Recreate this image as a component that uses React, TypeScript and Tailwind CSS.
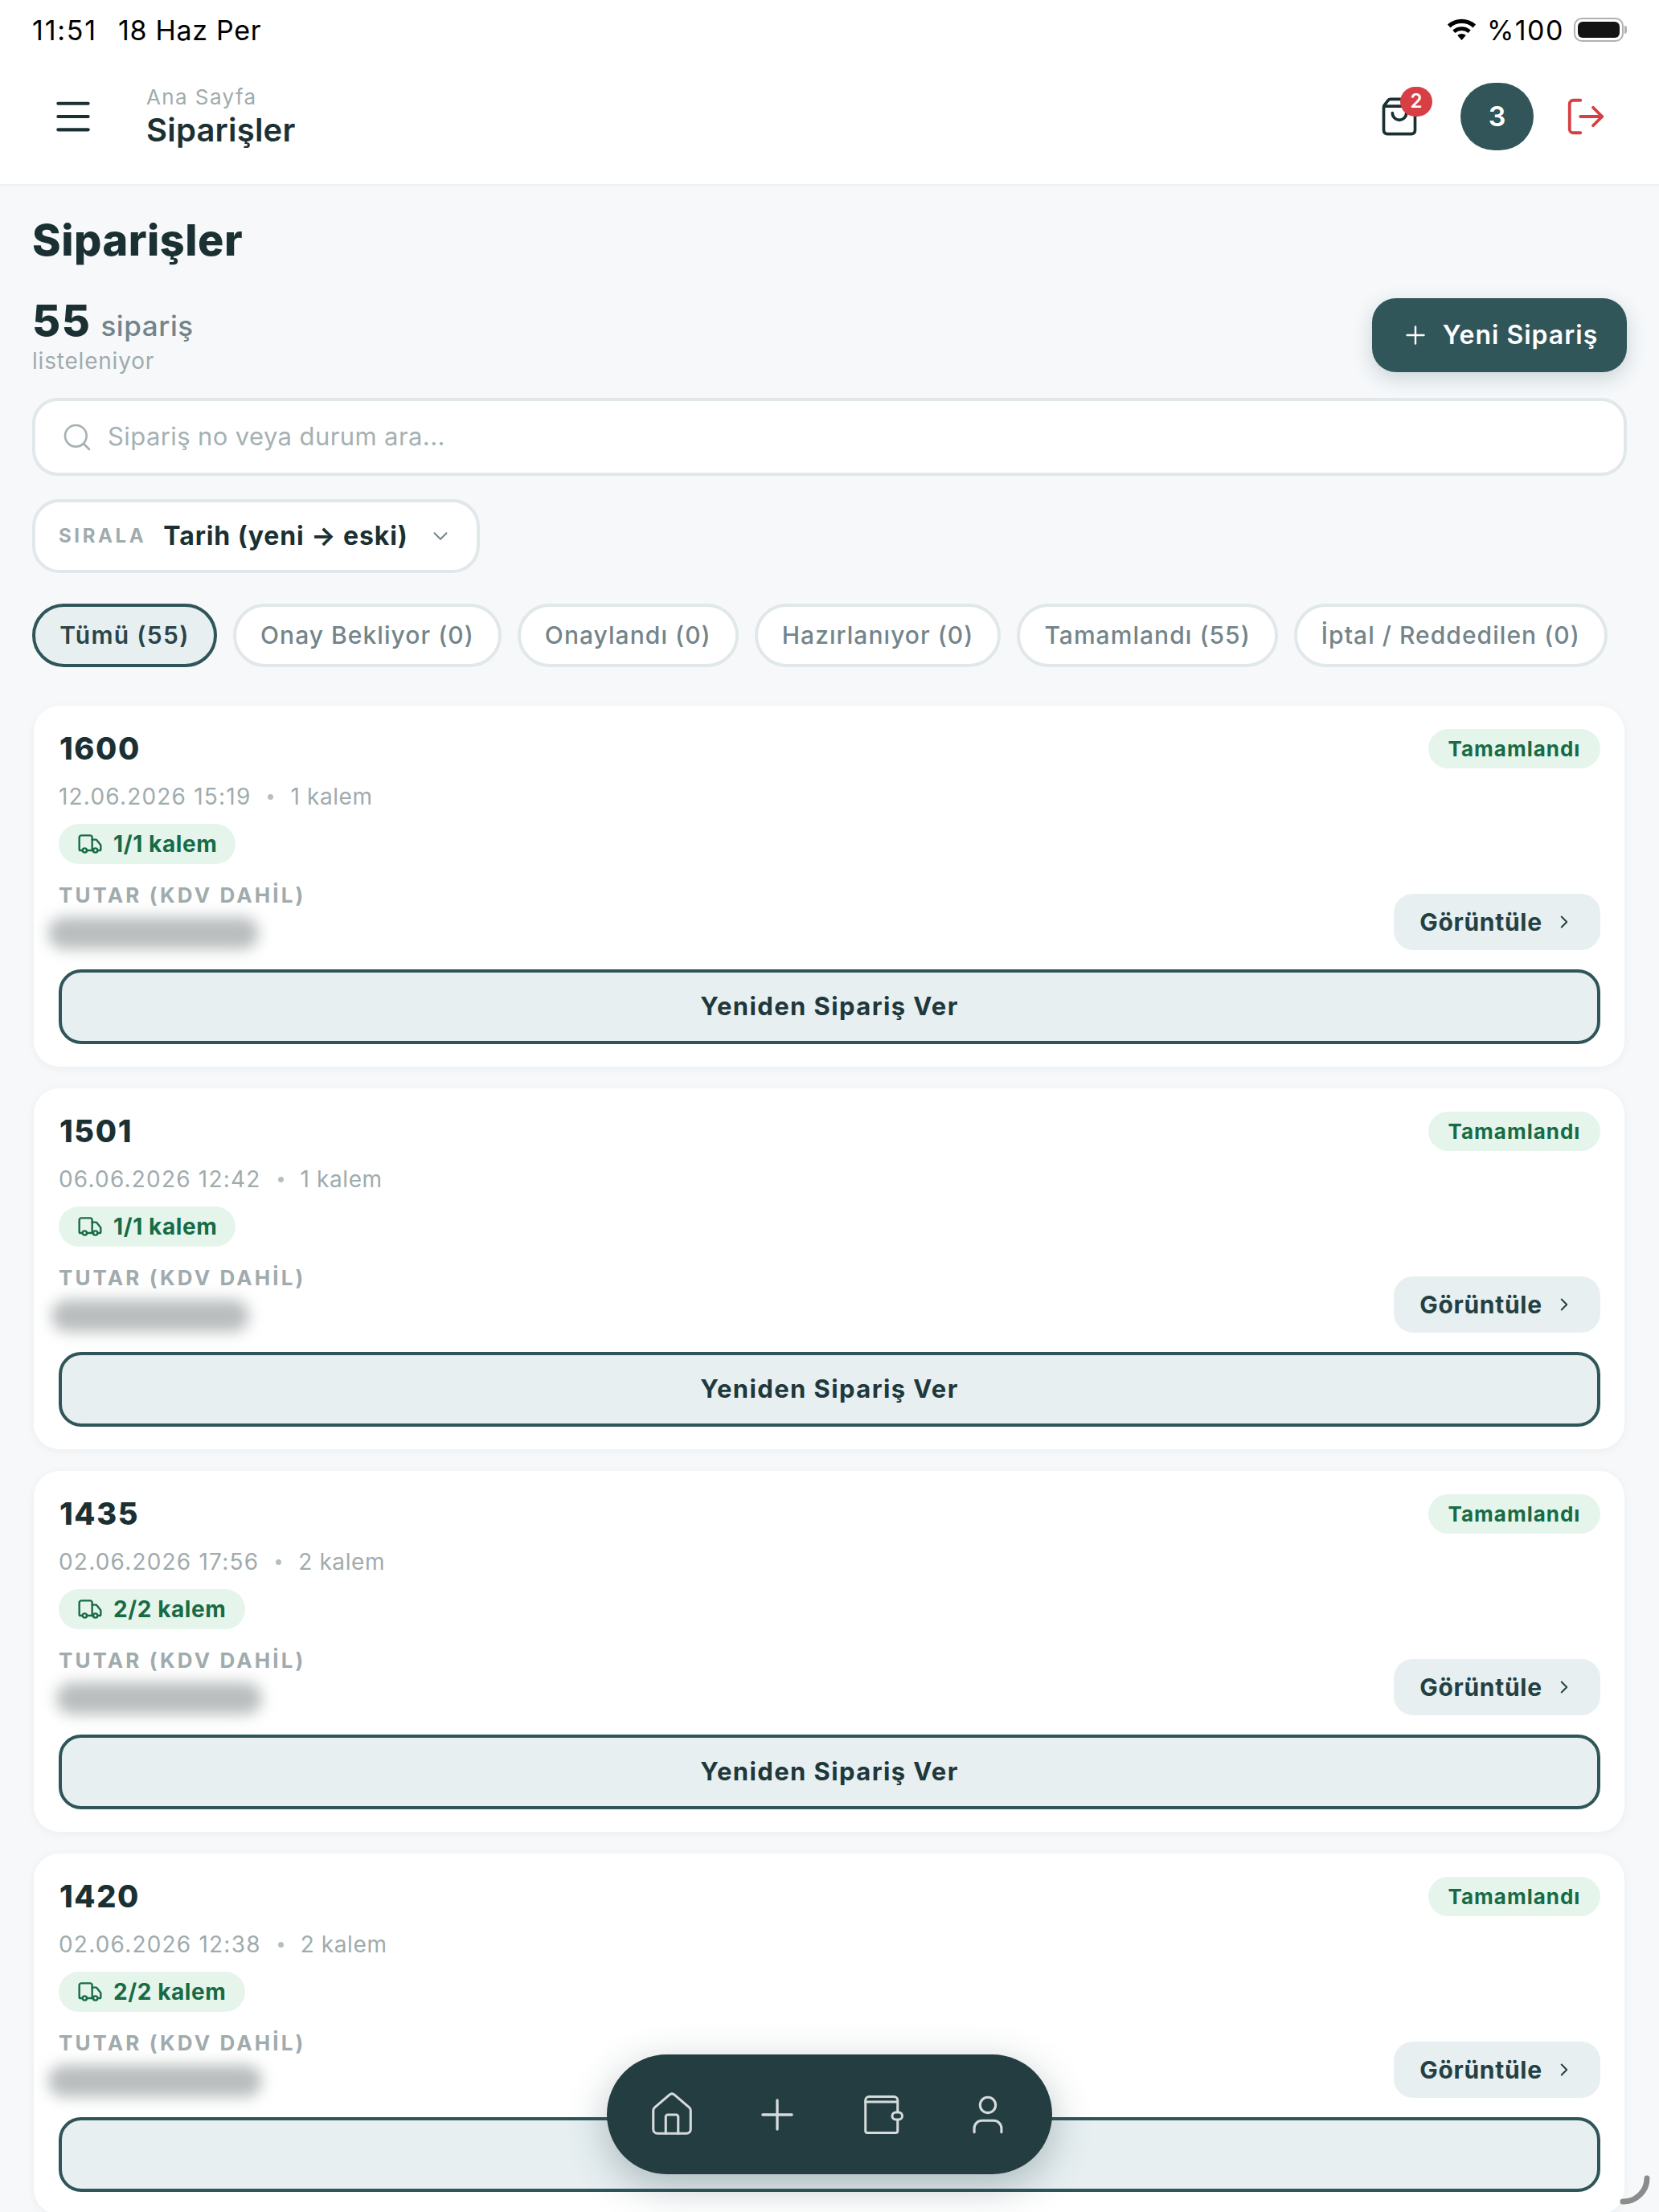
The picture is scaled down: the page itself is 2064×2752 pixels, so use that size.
import React from "react";
import { ChevronDown, ChevronRight, House, LogOut, Menu, Plus, Search, ShoppingBag, Truck, User } from "lucide-react";

const orders = [
  { no: "1600", date: "12.06.2026 15:19", items: "1 kalem", ship: "1/1 kalem", blur: "w-[262px]", offset: "-ml-[13px]", label: true },
  { no: "1501", date: "06.06.2026 12:42", items: "1 kalem", ship: "1/1 kalem", blur: "w-[246px]", offset: "-ml-[9px]", label: true },
  { no: "1435", date: "02.06.2026 17:56", items: "2 kalem", ship: "2/2 kalem", blur: "w-[256px]", offset: "-ml-[3px]", label: true },
  { no: "1420", date: "02.06.2026 12:38", items: "2 kalem", ship: "2/2 kalem", blur: "w-[266px]", offset: "-ml-[13px]", label: false },
];

const chips = [
  "Onay Bekliyor (0)",
  "Onaylandı (0)",
  "Hazırlanıyor (0)",
  "Tamamlandı (55)",
  "İptal / Reddedilen (0)",
];

function WalletIcon() {
  return (
    <svg viewBox="0 0 24 24" className="w-[60px] h-[60px]" fill="none" stroke="currentColor" strokeWidth="1.2" strokeLinecap="round" strokeLinejoin="round">
      <path d="M3.5 4.8A1.8 1.8 0 0 1 5.3 3h12.4a1.8 1.8 0 0 1 1.8 1.8V20a1 1 0 0 1-1 1h-14a1 1 0 0 1-1-1z" />
      <path d="M3.5 5.6h16" />
      <rect x="16.8" y="10.8" width="5" height="3.6" rx="1.8" fill="#243d40" />
    </svg>
  );
}

function OrderCard({ o }: { o: (typeof orders)[number] }) {
  return (
    <div className="bg-white rounded-[32px] pt-[29px] pb-[28px] pl-[31px] pr-[30px] shadow-[0_2px_12px_rgba(30,60,65,0.05)]">
      <div className="flex justify-between items-center h-[49px]">
        <div className="text-[38px] leading-[49px] font-extrabold text-[#1b3033] tracking-[1.6px] ml-[1px]">{o.no}</div>
        <div className="h-[49px] w-[214px] rounded-full bg-[#e6f5ec] text-[#176b45] text-[26px] font-bold tracking-[1px] flex items-center justify-center">Tamamlandı</div>
      </div>
      <div className="mt-[15px] h-[40px] flex items-center text-[28px] text-[#a0abad]">
        <span className="tracking-[1.2px]">{o.date}</span>
        <span className="mx-[21px] w-[7px] h-[7px] rounded-full bg-[#b5bfc1]" />
        <span className="tracking-[0.6px]">{o.items}</span>
      </div>
      <div className="mt-[14px] h-[50px] inline-flex items-center rounded-full bg-[#e6f5ec] pl-[23px] pr-[23px] text-[#176b45] text-[28px] font-bold tracking-[0.6px] align-top">
        <Truck className="w-[32px] h-[32px] mr-[13px]" strokeWidth={1.8} />
        {o.ship}
      </div>
      <div className="mt-[22px] flex justify-between items-end h-[85px]">
        <div>
          <div className="h-[36px] leading-[34px] text-[26px] font-bold text-[#a0abad] tracking-[3.1px]">TUTAR (KDV DAHİL)</div>
          <div className="h-[49px] pt-[8px]">
            <div className={`${o.blur} ${o.offset} h-[40px] rounded-full bg-[#b9bdbe] blur-[9px]`} />
          </div>
        </div>
        <div className="h-[70px] w-[257px] rounded-[24px] bg-[#e7eff1] flex items-center justify-center text-[#234043] text-[30px] font-bold tracking-[0.7px]">
          Görüntüle
          <ChevronRight className="w-[26px] h-[26px] ml-[14px]" strokeWidth={1.8} />
        </div>
      </div>
      <div className="mt-[24px] h-[93px] rounded-[28px] border-[4px] border-[#2f5558] bg-[#e7eff1] flex items-center justify-center text-[31px] font-bold text-[#1f383b] tracking-[1.4px]">
        {o.label ? "Yeniden Sipariş Ver" : ""}
      </div>
    </div>
  );
}

export default function App() {
  return (
    <div className="relative w-[2064px] h-[2752px] overflow-hidden bg-[#f6f8fa] font-['Inter',sans-serif] text-[#1b3033]">
      <header className="h-[231px] bg-white border-b-[2px] border-[#eef1f3]">
        <div className="h-[72px] px-[40px] pt-[2px] flex justify-between items-center text-[34px] text-black">
          <div className="flex gap-[26px]">
            <span className="tracking-[1.8px]">11:51</span>
            <span className="tracking-[0.7px]">18 Haz Per</span>
          </div>
          <div className="flex items-center">
            <svg viewBox="0 0 24 18" className="w-[37px] h-[28px]" fill="currentColor">
              <path d="M12 17.5 8.6 13.6a5 5 0 0 1 6.8 0z" />
              <path d="M6.7 11.6 4.7 9.3a11 11 0 0 1 14.6 0l-2 2.3a8 8 0 0 0-10.6 0z" />
              <path d="M2.9 7.3.6 4.8a17 17 0 0 1 22.8 0l-2.3 2.5a13.6 13.6 0 0 0-18.2 0z" />
            </svg>
            <span className="ml-[13px] mr-[12px] tracking-[1.5px]">%100</span>
            <div className="w-[62px] h-[30px] rounded-[10px] border-[2px] border-[#b0b0b0] p-[3px]">
              <div className="w-full h-full rounded-[6px] bg-[#141414]" />
            </div>
            <div className="w-[3px] h-[10px] ml-[1px] rounded-r-full bg-[#b0b0b0]" />
          </div>
        </div>
        <div className="h-[157px] pl-[63px] pr-[64px] flex items-center">
          <Menu className="w-[56px] h-[56px] -mt-[12px] text-[#1b3033]" strokeWidth={1.75} />
          <div className="ml-[63px] -mt-[12px]">
            <div className="text-[26px] leading-[34px] text-[#a0abad] tracking-[1.4px]">Ana Sayfa</div>
            <div className="text-[40px] leading-[48px] font-semibold text-[#1b3033] tracking-[0.2px]">Siparişler</div>
          </div>
          <div className="ml-auto flex items-center -mt-[12px]">
            <div className="relative w-[52px] h-[52px] flex items-center justify-center">
              <ShoppingBag className="w-[52px] h-[52px] text-[#1b3033]" strokeWidth={1.7} />
              <div className="absolute -top-[11px] -right-[15px] w-[40px] h-[37px] rounded-full bg-[#d64045] text-white text-[24px] font-semibold flex items-center justify-center">2</div>
            </div>
            <div className="ml-[50px] w-[91px] h-[84px] rounded-full bg-[#315558] text-white text-[34px] font-semibold flex items-center justify-center">3</div>
            <LogOut className="ml-[38px] w-[54px] h-[54px] text-[#d64045]" strokeWidth={1.7} />
          </div>
        </div>
      </header>

      <main className="px-[40px]">
        <h1 className="mt-[38px] text-[54px] leading-[60px] font-extrabold text-[#1b3033] tracking-[0.5px]">Siparişler</h1>
        <div className="mt-[42px] flex justify-between items-start h-[92px]">
          <div>
            <div className="h-[56px] flex items-baseline">
              <span className="text-[54px] leading-[56px] font-extrabold tracking-[1.5px]">55</span>
              <span className="ml-[12px] text-[35px] font-medium text-[#73848a] tracking-[0.6px]">sipariş</span>
            </div>
            <div className="text-[28px] leading-[36px] mt-[4px] text-[#a0abad] tracking-[0.8px]">listeleniyor</div>
          </div>
          <div className="w-[317px] h-[92px] rounded-[30px] bg-[#31565a] text-white text-[32px] font-semibold tracking-[1px] flex items-center justify-center shadow-[0_8px_24px_rgba(49,86,90,0.22)]">
            <Plus className="w-[36px] h-[36px] mr-[16px]" strokeWidth={1.6} />
            Yeni Sipariş
          </div>
        </div>

        <div className="mt-[32px] h-[97px] rounded-[32px] border-[4px] border-[#e0e8e9] bg-white flex items-center pl-[32px] text-[31px] text-[#a5b1b3] tracking-[0.4px]">
          <Search className="w-[40px] h-[40px] mr-[18px]" strokeWidth={1.6} />
          Sipariş no veya durum ara...
        </div>

        <div className="mt-[29px] w-[557px] h-[92px] rounded-[34px] border-[4px] border-[#e0e8e9] bg-white flex items-center pl-[29px]">
          <span className="text-[24px] font-bold text-[#a0abad] tracking-[3.6px]">SIRALA</span>
          <span className="ml-[21px] text-[32px] font-bold text-[#1b3033] tracking-[0.9px]">Tarih (yeni → eski)</span>
          <ChevronDown className="ml-[25px] w-[30px] h-[30px] text-[#73848a]" strokeWidth={1.6} />
        </div>

        <div className="mt-[38px] flex gap-[20px] h-[79px]">
          <div className="h-[79px] w-[230px] rounded-full border-[4px] border-[#2f5558] bg-[#e7eff1] flex items-center justify-center text-[30px] font-semibold text-[#2a4447] tracking-[1.3px]">Tümü (55)</div>
          {chips.map((c) => (
            <div key={c} className="h-[79px] rounded-full border-[4px] border-[#e0e8e9] bg-white px-[30px] flex items-center text-[30px] font-medium text-[#73848a] tracking-[1.05px]">{c}</div>
          ))}
        </div>

        <div className="mt-[48px] flex flex-col gap-[27px] ml-[2px] mr-[3px]">
          {orders.map((o) => (
            <OrderCard key={o.no} o={o} />
          ))}
        </div>
      </main>

      <nav className="absolute left-[755px] top-[2556px] w-[554px] h-[149px] rounded-[75px] bg-[#243d40] text-[#d5dbdc] flex items-center px-[15px] shadow-[0_14px_50px_rgba(30,60,65,0.3)]">
        <div className="w-[131px] flex justify-center"><House className="w-[62px] h-[62px]" strokeWidth={1.2} /></div>
        <div className="w-[131px] flex justify-center"><Plus className="w-[62px] h-[62px]" strokeWidth={1.3} /></div>
        <div className="w-[131px] flex justify-center"><WalletIcon /></div>
        <div className="w-[131px] flex justify-center"><User className="w-[58px] h-[58px]" strokeWidth={1.3} /></div>
      </nav>

      <svg viewBox="0 0 40 38" className="absolute left-[2014px] top-[2706px] w-[40px] h-[38px]" fill="none" stroke="#8c8c8c" strokeWidth="7" strokeLinecap="round">
        <path d="M35 4C35 20 22 33 5 33" />
      </svg>
    </div>
  );
}
